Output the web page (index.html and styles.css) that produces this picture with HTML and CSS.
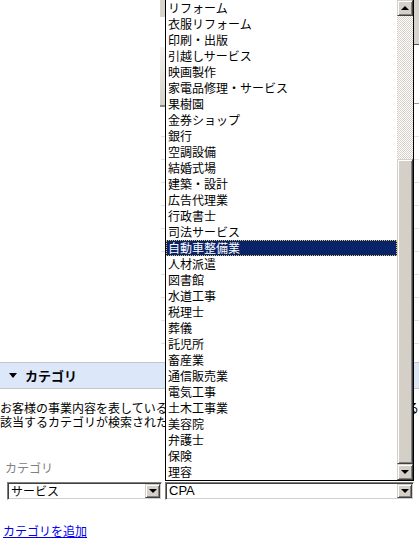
FILE: index.html
```html
<!DOCTYPE html>
<html lang="ja">
<head>
    <meta charset="UTF-8">
    <title>カテゴリ</title>
    <link rel="stylesheet" href="styles.css">
</head>
<body>
    <!-- page content that sits under the open list -->
    <div class="under">
        <div class="tools">
            <div class="tool-left">
                <div class="mini-box"></div>
                <div class="big-btn"></div>
            </div>
            <div class="tool-right">
                <div class="bar"></div>
                <div class="icon-box"><span class="red-mark"></span></div>
            </div>
        </div>
        <div class="rows">
            <div class="row"></div>
            <div class="row"></div>
            <div class="row"></div>
            <div class="row"></div>
            <div class="row"></div>
            <div class="row"></div>
            <div class="row"></div>
            <div class="row"></div>
            <div class="row"></div>
            <div class="row"></div>
        </div>
    </div>

    <div class="section-head">
        <span class="tri"></span>
        <span class="head-text">カテゴリ</span>
    </div>

    <p class="desc">お客様の事業内容を表しているカテゴリを入力してください。入力を開始すると<br>該当するカテゴリが検索されたリストが表示されます。</p>

    <div class="field-label">カテゴリ</div>
    <div class="selects">
        <div class="select select-main">
            <span class="select-text">サービス</span>
            <span class="drop-btn"><span class="arrow-down"></span></span>
        </div>
        <div class="select select-sub">
            <span class="select-text latin">CPA</span>
            <span class="drop-btn"><span class="arrow-down"></span></span>
        </div>
    </div>

    <a class="add-link" href="#">カテゴリを追加</a>

    <!-- open dropdown list of the second select -->
    <div class="dropdown">
        <ul class="options">
            <li>リフォーム</li>
            <li>衣服リフォーム</li>
            <li>印刷・出版</li>
            <li>引越しサービス</li>
            <li>映画製作</li>
            <li>家電品修理・サービス</li>
            <li>果樹園</li>
            <li>金券ショップ</li>
            <li>銀行</li>
            <li>空調設備</li>
            <li>結婚式場</li>
            <li>建築・設計</li>
            <li>広告代理業</li>
            <li>行政書士</li>
            <li>司法サービス</li>
            <li class="selected">自動車整備業</li>
            <li>人材派遣</li>
            <li>図書館</li>
            <li>水道工事</li>
            <li>税理士</li>
            <li>葬儀</li>
            <li>託児所</li>
            <li>畜産業</li>
            <li>通信販売業</li>
            <li>電気工事</li>
            <li>土木工事業</li>
            <li>美容院</li>
            <li>弁護士</li>
            <li>保険</li>
            <li>理容</li>
        </ul>
        <div class="scrollbar">
            <div class="sb-btn"><span class="arrow-up"></span></div>
            <div class="sb-track"></div>
            <div class="sb-thumb"></div>
            <div class="sb-btn"><span class="arrow-down"></span></div>
        </div>
    </div>
</body>
</html>
```

FILE: styles.css
```css
body {
    margin: 0;
    width: 419px;
    height: 538px;
    overflow: hidden;
    position: relative;
    font-family: "Noto Sans CJK JP", "Liberation Sans", sans-serif;
    font-size: 12px;
    color: #000;
    background: #fff;
}

/* content hidden behind the list */
.under {
    height: 362px;
}
.tools {
    display: flex;
    justify-content: space-between;
    height: 108px;
}
.tool-left {
    width: 168px;
    display: flex;
    flex-direction: column;
    align-items: flex-end;
}
.mini-box {
    width: 8px;
    height: 17px;
    background: #d8d4cc;
}
.big-btn {
    margin-top: 30px;
    width: 8px;
    height: 58px;
    background: linear-gradient(#f4f2ee, #d6d2ca);
    border-bottom: 2px solid #888;
}
.tool-right {
    width: 14px;
}
.tool-right .bar {
    height: 44px;
    background: #d8d4cc;
    border-bottom: 1px solid #555;
}
.icon-box {
    height: 59px;
    border-bottom: 1px solid #999;
    padding-top: 13px;
    box-sizing: border-box;
}
.red-mark {
    display: block;
    width: 6px;
    height: 9px;
    background: #d22;
}
.rows {
    padding-top: 6px;
    margin-left: 161px;
}
.row {
    height: 22px;
    border-bottom: 1px solid #e2e2e2;
}

/* section header */
.section-head {
    height: 25px;
    background: #dde7fa;
    border-top: 1px solid #c6c6c6;
    border-bottom: 1px solid #c6c6c6;
    display: flex;
    align-items: center;
}
.tri {
    width: 0;
    height: 0;
    margin-left: 9px;
    margin-right: 8px;
    border-left: 4px solid transparent;
    border-right: 4px solid transparent;
    border-top: 5px solid #000;
}
.head-text {
    font-weight: bold;
    font-size: 13px;
}

.desc {
    margin: 12px 0 0;
    line-height: 14px;
    white-space: nowrap;
    overflow: hidden;
}

.field-label {
    margin: 32px 0 0 5px;
    line-height: 14px;
    color: #808080;
}

/* classic select boxes */
.selects {
    display: flex;
    margin-top: 7px;
}
.select {
    height: 18px;
    box-sizing: border-box;
    border-top: 1px solid #808080;
    border-left: 1px solid #808080;
    border-bottom: 1px solid #fff;
    border-right: 1px solid #fff;
    box-shadow: inset 1px 1px 0 #404040, inset -1px -1px 0 #d4d0c8;
    background: #fff;
    display: flex;
    align-items: center;
    justify-content: space-between;
    padding: 1px;
}
.select-main {
    margin-left: 7px;
    width: 155px;
}
.select-sub {
    margin-left: 3px;
    width: 249px;
}
.select-text {
    padding-left: 2px;
    line-height: 14px;
}
.latin {
    font-family: "Liberation Sans", sans-serif;
    font-size: 13px;
}
.drop-btn,
.sb-btn {
    width: 16px;
    height: 16px;
    box-sizing: border-box;
    background: #d4d0c8;
    border-top: 1px solid #d4d0c8;
    border-left: 1px solid #d4d0c8;
    border-right: 1px solid #404040;
    border-bottom: 1px solid #404040;
    box-shadow: inset 1px 1px 0 #fff, inset -1px -1px 0 #808080;
    display: flex;
    align-items: center;
    justify-content: center;
}
.drop-btn {
    height: 14px;
    width: 15px;
}
.arrow-down,
.arrow-up {
    width: 0;
    height: 0;
    border-left: 4px solid transparent;
    border-right: 4px solid transparent;
}
.arrow-down {
    border-top: 4px solid #000;
}
.arrow-up {
    border-bottom: 4px solid #000;
}

.add-link {
    display: inline-block;
    margin: 24px 0 0 3px;
    line-height: 14px;
    color: #0000ee;
    text-decoration: underline;
}

/* the open list, drawn over the page */
.dropdown {
    position: absolute;
    left: 165px;
    top: -1px;
    width: 247px;
    height: 480px;
    border: 1px solid #000;
    background: #fff;
    display: flex;
}
.options {
    list-style: none;
    margin: 0;
    padding: 0;
    flex: 1;
}
.options li {
    height: 16px;
    line-height: 16px;
    padding-left: 2px;
    white-space: nowrap;
}
.options li.selected {
    background: #0a246a;
    color: #fff;
    outline: 1px dotted #e8c35a;
    outline-offset: -1px;
}
.scrollbar {
    width: 16px;
    display: flex;
    flex-direction: column;
}
.sb-track {
    height: 143px;
    background: repeating-conic-gradient(#d4d0c8 0 25%, #fff 0 50%) 0 0 / 2px 2px;
}
.sb-thumb {
    flex: 1;
    box-sizing: border-box;
    background: #d4d0c8;
    border-top: 1px solid #d4d0c8;
    border-left: 1px solid #d4d0c8;
    border-right: 1px solid #404040;
    border-bottom: 1px solid #404040;
    box-shadow: inset 1px 1px 0 #fff, inset -1px -1px 0 #808080;
}
```
